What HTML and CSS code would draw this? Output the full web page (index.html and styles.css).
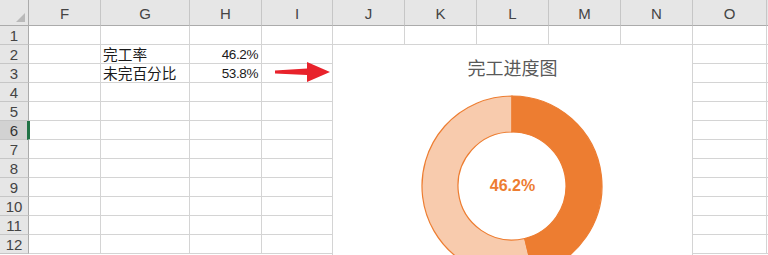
FILE: index.html
```html
<!DOCTYPE html>
<html lang="zh-CN">
<head>
<meta charset="utf-8">
<title>完工进度图</title>
<link rel="stylesheet" href="styles.css">
</head>
<body>
<div class="page">
  <div class="sheet">
    <div class="corner"><span class="tri"></span></div>
    <div class="ch">F</div><div class="ch">G</div><div class="ch">H</div><div class="ch">I</div><div class="ch">J</div><div class="ch">K</div><div class="ch">L</div><div class="ch">M</div><div class="ch">N</div><div class="ch">O</div><div class="ch"></div>

    <div class="rh">1</div><div class="c"></div><div class="c"></div><div class="c"></div><div class="c"></div><div class="c"></div><div class="c"></div><div class="c"></div><div class="c"></div><div class="c"></div><div class="c"></div><div class="c"></div>
    <div class="rh">2</div><div class="c"></div><div class="c txt">完工率</div><div class="c num">46.2%</div><div class="c"></div><div class="c"></div><div class="c"></div><div class="c"></div><div class="c"></div><div class="c"></div><div class="c"></div><div class="c"></div>
    <div class="rh">3</div><div class="c"></div><div class="c txt">未完百分比</div><div class="c num">53.8%</div><div class="c"></div><div class="c"></div><div class="c"></div><div class="c"></div><div class="c"></div><div class="c"></div><div class="c"></div><div class="c"></div>
    <div class="rh">4</div><div class="c"></div><div class="c"></div><div class="c"></div><div class="c"></div><div class="c"></div><div class="c"></div><div class="c"></div><div class="c"></div><div class="c"></div><div class="c"></div><div class="c"></div>
    <div class="rh">5</div><div class="c"></div><div class="c"></div><div class="c"></div><div class="c"></div><div class="c"></div><div class="c"></div><div class="c"></div><div class="c"></div><div class="c"></div><div class="c"></div><div class="c"></div>
    <div class="rh sel">6</div><div class="c active"></div><div class="c"></div><div class="c"></div><div class="c"></div><div class="c"></div><div class="c"></div><div class="c"></div><div class="c"></div><div class="c"></div><div class="c"></div><div class="c"></div>
    <div class="rh">7</div><div class="c"></div><div class="c"></div><div class="c"></div><div class="c"></div><div class="c"></div><div class="c"></div><div class="c"></div><div class="c"></div><div class="c"></div><div class="c"></div><div class="c"></div>
    <div class="rh">8</div><div class="c"></div><div class="c"></div><div class="c"></div><div class="c"></div><div class="c"></div><div class="c"></div><div class="c"></div><div class="c"></div><div class="c"></div><div class="c"></div><div class="c"></div>
    <div class="rh">9</div><div class="c"></div><div class="c"></div><div class="c"></div><div class="c"></div><div class="c"></div><div class="c"></div><div class="c"></div><div class="c"></div><div class="c"></div><div class="c"></div><div class="c"></div>
    <div class="rh">10</div><div class="c"></div><div class="c"></div><div class="c"></div><div class="c"></div><div class="c"></div><div class="c"></div><div class="c"></div><div class="c"></div><div class="c"></div><div class="c"></div><div class="c"></div>
    <div class="rh">11</div><div class="c"></div><div class="c"></div><div class="c"></div><div class="c"></div><div class="c"></div><div class="c"></div><div class="c"></div><div class="c"></div><div class="c"></div><div class="c"></div><div class="c"></div>
    <div class="rh">12</div><div class="c"></div><div class="c"></div><div class="c"></div><div class="c"></div><div class="c"></div><div class="c"></div><div class="c"></div><div class="c"></div><div class="c"></div><div class="c"></div><div class="c"></div>
  </div>

  <svg class="arrow" width="60" height="24" viewBox="0 0 60 24">
    <polygon points="0,8.5 32,6.5 32,0 55,10 32,20 32,13 0,11.5" fill="#e8222b"/>
  </svg>

  <div class="chart">
    <div class="chart-title">完工进度图</div>
    <svg class="donut" width="361" height="220" viewBox="0 0 361 220">
      <path d="M201.29 229.44 A90 90 0 1 1 180 52 L180 88 A54 54 0 1 0 192.77 194.47 Z" fill="#f8cbad" stroke="#ed7d31" stroke-width="1.2"/>
      <path d="M180 52 A90 90 0 0 1 201.29 229.44 L192.77 194.47 A54 54 0 0 0 180 88 Z" fill="#ed7d31" stroke="#ed7d31" stroke-width="1.2"/>
    </svg>
    <div class="center-label">46.2%</div>
  </div>
</div>
</body>
</html>
```

FILE: styles.css
```css
html, body {
  margin: 0;
  padding: 0;
  background: #ffffff;
  overflow: hidden;
}

.page {
  position: relative;
  width: 768px;
  height: 255px;
  overflow: hidden;
}

.sheet {
  display: grid;
  grid-template-columns: 29px 72px 89px 72px 71px 72px 72px 72px 72px 72px 74px 60px;
  grid-template-rows: 26px repeat(12, 19px);
  font-family: "Liberation Sans", Arial, sans-serif;
}

.sheet > div {
  box-sizing: border-box;
}

.corner {
  position: relative;
  background: #e6e6e6;
  border-right: 1px solid #ababab;
  border-bottom: 1px solid #ababab;
}

.tri {
  position: absolute;
  right: 3px;
  bottom: 3px;
  width: 0;
  height: 0;
  border-left: 9px solid transparent;
  border-bottom: 9px solid #b9b9b9;
}

.ch {
  background: #e6e6e6;
  border-right: 1px solid #c6c6c6;
  border-bottom: 1px solid #ababab;
  color: #444444;
  font-size: 15px;
  display: flex;
  align-items: center;
  justify-content: center;
  padding-top: 1px;
}

.rh {
  background: #e6e6e6;
  border-right: 1px solid #ababab;
  border-bottom: 1px solid #c6c6c6;
  color: #444444;
  font-size: 15px;
  display: flex;
  align-items: center;
  justify-content: center;
}

.rh.sel {
  background: #d2d2d2;
  color: #333333;
}

.c {
  border-right: 1px solid #d4d4d4;
  border-bottom: 1px solid #d4d4d4;
  font-size: 14px;
  color: #1a1a1a;
  display: flex;
  align-items: center;
  white-space: nowrap;
}

.c.active {
  border-left: 3px solid #217346;
  margin-left: -2px;
}

.txt {
  font-family: "Noto Sans CJK SC", "Noto Sans", sans-serif;
  font-size: 14.7px;
  padding-left: 2px;
  line-height: 18px;
}

.num {
  justify-content: flex-end;
  padding-right: 3px;
  font-size: 13.5px;
  letter-spacing: -0.4px;
}

.arrow {
  position: absolute;
  left: 275px;
  top: 62px;
}

.chart {
  position: absolute;
  left: 332px;
  top: 44px;
  width: 361px;
  height: 220px;
  box-sizing: border-box;
  background: #ffffff;
  border: 1px solid #d4d4d4;
}

.chart-title {
  position: absolute;
  left: 0;
  right: 0;
  top: 10px;
  text-align: center;
  font-family: "Noto Sans CJK SC", "Noto Sans", sans-serif;
  font-size: 18px;
  line-height: 24px;
  color: #595959;
}

.donut {
  position: absolute;
  left: -1px;
  top: -1px;
}

.center-label {
  position: absolute;
  left: 0;
  width: 359px;
  top: 131px;
  text-align: center;
  font-family: "Liberation Sans", Arial, sans-serif;
  font-weight: bold;
  font-size: 16px;
  line-height: 20px;
  color: #ed7d31;
}
```
